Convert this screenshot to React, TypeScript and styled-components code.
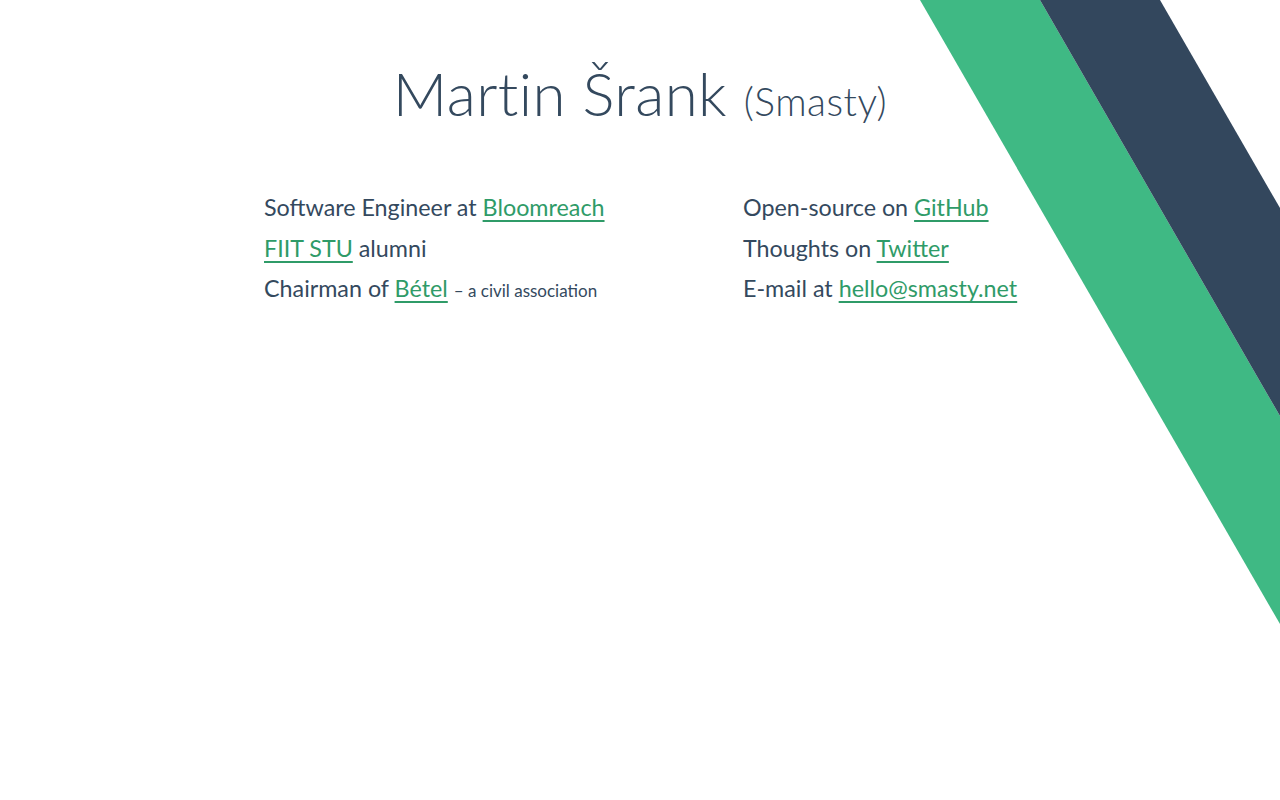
import React from 'react';
import styled, { createGlobalStyle } from 'styled-components';

const colors = {
  text: '#34495e',
  link: '#2f9b68',
  green: '#3fb984',
  dark: '#33475d',
};

const GlobalStyle = createGlobalStyle`
  html, body {
    margin: 0;
    padding: 0;
    background: #fff;
  }
  body {
    font-family: Lato, "Open Sans", sans-serif;
    color: ${colors.text};
  }
`;

// --- STYLES ---

const Page = styled.div`
  position: relative;
  width: 100%;
  height: 800px;
  overflow: hidden;
`;

// faixas diagonais no canto superior direito
const Stripes = styled.svg`
  position: absolute;
  top: 0;
  right: 0;
  width: 360px;
  height: 624px;
  pointer-events: none;
`;

const Content = styled.main`
  position: relative;
  padding-top: 58px;
`;

const Title = styled.h1`
  margin: 0;
  text-align: center;
  font-size: 60px;
  font-weight: 300;
  line-height: 70px;
  letter-spacing: 0.4px;
`;

const Nickname = styled.small`
  font-size: 39px;
  letter-spacing: 0.5px;
`;

const Columns = styled.div`
  width: 752px;
  margin: 51px auto 0;
  display: grid;
  grid-template-columns: 479px 1fr;
`;

const List = styled.ul`
  list-style: none;
  margin: 0;
  padding: 0;

  li {
    font-size: 23.3px;
    line-height: 40.5px;
    white-space: nowrap;
  }
`;

const Link = styled.a`
  color: ${colors.link};
  text-decoration: underline;
  text-decoration-thickness: 2px;
  text-underline-offset: 4px;
`;

const Note = styled.span`
  font-size: 17px;
`;

// --- COMPONENT ---

const App: React.FC = () => {
  return (
    <Page>
      <GlobalStyle />
      <Stripes viewBox="0 0 360 624">
        <polygon points="0,0 120,0 360,416 360,624" fill={colors.green} />
        <polygon points="120,0 240,0 360,208 360,416" fill={colors.dark} />
      </Stripes>
      <Content>
        <Title>
          Martin Šrank <Nickname>(Smasty)</Nickname>
        </Title>
        <Columns>
          <List>
            <li>
              Software Engineer at <Link href="#">Bloomreach</Link>
            </li>
            <li>
              <Link href="#">FIIT STU</Link> alumni
            </li>
            <li>
              Chairman of <Link href="#">Bétel</Link> <Note>– a civil association</Note>
            </li>
          </List>
          <List>
            <li>
              Open-source on <Link href="#">GitHub</Link>
            </li>
            <li>
              Thoughts on <Link href="#">Twitter</Link>
            </li>
            <li>
              E-mail at <Link href="#">hello@smasty.net</Link>
            </li>
          </List>
        </Columns>
      </Content>
    </Page>
  );
};

export default App;
